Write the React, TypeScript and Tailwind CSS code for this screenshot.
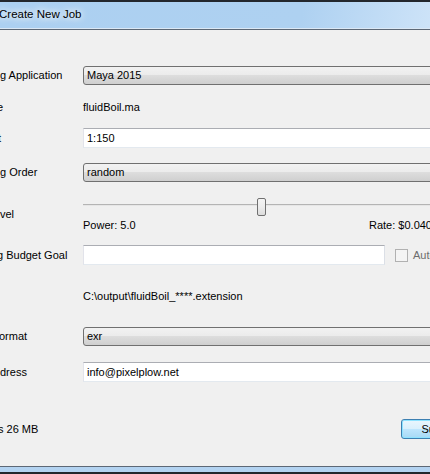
import React from "react";

const comboCls =
  "h-[19px] w-[360px] shrink-0 flex items-center pl-[3px] border border-[#707070] rounded-[3px] bg-[linear-gradient(to_bottom,#f2f2f2_0%,#ebebeb_50%,#dddddd_50%,#cfcfcf_100%)]";
const inputCls =
  "h-[20px] shrink-0 flex items-center pl-[3px] bg-white border border-t-[#abadb3] border-l-[#e2e3ea] border-r-[#dbdfe6] border-b-[#e3e9ef]";

export default function App() {
  return (
    <div className="w-[430px] h-[474px] overflow-hidden bg-[#f0f0f0] font-['Liberation_Sans',Arial,sans-serif] text-[11px] text-black flex flex-col">
      {/* title bar */}
      <div className="h-[2px] bg-[#23272d] shrink-0" />
      <div className="h-[26px] shrink-0 flex items-center bg-[linear-gradient(100deg,#acd0f1_0%,#aed1f1_70%,#cde3f8_100%)]">
        <span className="ml-[-1px] text-[11.5px] [text-shadow:0_0_6px_#ffffff,0_0_10px_#ffffff] whitespace-nowrap">
          Create New Job
        </span>
      </div>
      <div className="h-[1px] bg-[#dbe8f5] shrink-0" />
      <div className="h-[1px] bg-[#5d6876] shrink-0" />

      {/* Row 1 */}
      <div className="flex items-center h-[19px] mt-[36px] shrink-0">
        <div className="w-[83px] shrink-0 whitespace-nowrap">g Application</div>
        <div className={comboCls}>Maya 2015</div>
      </div>

      {/* Row 2 */}
      <div className="flex items-center h-[14px] mt-[15px] shrink-0">
        <div className="w-[83px] shrink-0 whitespace-nowrap ml-[-3px] pl-[0px]">e</div>
        <div className="whitespace-nowrap ml-[3px]">fluidBoil.ma</div>
      </div>

      {/* Row 3 */}
      <div className="flex items-center h-[20px] mt-[14px] shrink-0">
        <div className="w-[83px] shrink-0 whitespace-nowrap ml-[-2px]">t</div>
        <div className={inputCls + " w-[360px] ml-[2px]"}>1:150</div>
      </div>

      {/* Row 4 */}
      <div className="flex items-center h-[19px] mt-[15px] shrink-0">
        <div className="w-[83px] shrink-0 whitespace-nowrap">g Order</div>
        <div className={comboCls}>random</div>
      </div>

      {/* Row 5 slider */}
      <div className="flex items-center h-[36px] mt-[14px] shrink-0">
        <div className="w-[83px] shrink-0 whitespace-nowrap">vel</div>
        <div className="w-[360px] shrink-0 flex flex-col">
          <div className="relative h-[22px]">
            <div className="absolute left-0 right-0 top-[8px] h-[1px] bg-[#b4b4b4]" />
            <div className="absolute left-0 right-0 top-[9px] h-[1px] bg-[#e6e6e6]" />
            <div className="absolute left-[174px] top-[2px] w-[9px] h-[18px] rounded-[2px] border border-[#707070] bg-[linear-gradient(to_bottom,#f4f4f4_0%,#ececec_50%,#dcdcdc_100%)]" />
          </div>
          <div className="h-[14px] flex items-center">
            <div className="w-[286px] shrink-0 whitespace-nowrap">Power: 5.0</div>
            <div className="whitespace-nowrap">Rate: $0.040</div>
          </div>
        </div>
      </div>

      {/* Row 6 */}
      <div className="flex items-center h-[20px] mt-[13px] shrink-0">
        <div className="w-[83px] shrink-0 whitespace-nowrap ml-[-3px] pl-[0px]">g Budget Goal</div>
        <div className={inputCls + " w-[302px] ml-[3px]"} />
        <div className="ml-[10px] w-[13px] h-[13px] shrink-0 border border-[#b1b1b1] bg-[#f4f4f4]" />
        <div className="ml-[5px] whitespace-nowrap text-[#6d6d6d]">Automatic</div>
      </div>

      {/* Row 7 */}
      <div className="flex items-center h-[14px] mt-[24px] shrink-0">
        <div className="w-[83px] shrink-0" />
        <div className="whitespace-nowrap">C:\output\fluidBoil_****.extension</div>
      </div>

      {/* Row 8 */}
      <div className="flex items-center h-[19px] mt-[24px] shrink-0">
        <div className="w-[83px] shrink-0 whitespace-nowrap ml-[-1px]">ormat</div>
        <div className={comboCls + " ml-[1px]"}>exr</div>
      </div>

      {/* Row 9 */}
      <div className="flex items-center h-[20px] mt-[16px] shrink-0">
        <div className="w-[83px] shrink-0 whitespace-nowrap">dress</div>
        <div className={inputCls + " w-[360px]"}>info@pixelplow.net</div>
      </div>

      {/* Bottom row */}
      <div className="flex items-center h-[20px] mt-[37px] shrink-0">
        <div className="w-[401px] shrink-0 whitespace-nowrap ml-[-2px]">s 26 MB</div>
        <div className="w-[75px] h-[20px] shrink-0 ml-[2px] flex items-center justify-center rounded-[3px] border border-[#3c7fb1] bg-[linear-gradient(to_bottom,#eaf6fd_0%,#d9f0fc_50%,#bee6fd_50%,#a7d9f5_100%)] shadow-[inset_0_0_0_1px_#8ee3ff]">
          Submit
        </div>
      </div>

      <div className="flex-1" />
      {/* bottom frame */}
      <div className="h-[1px] bg-[#5d6876] shrink-0" />
      <div className="h-[5px] bg-[#b3d3f1] shrink-0" />
      <div className="h-[2px] bg-[#23272d] shrink-0" />
    </div>
  );
}
